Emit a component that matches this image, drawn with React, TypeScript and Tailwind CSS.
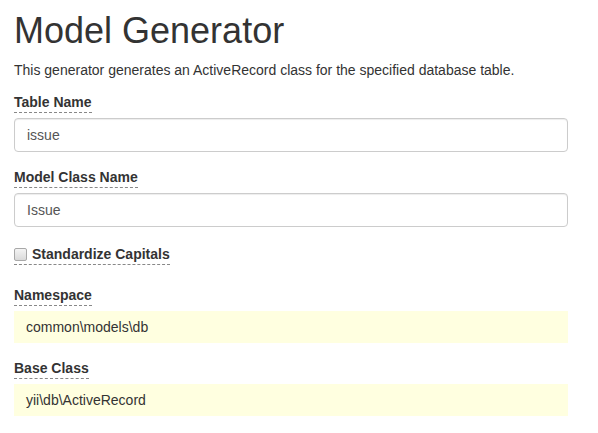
const labelCls =
  "block w-fit font-bold text-[14px] leading-[20px] text-[#333] border-b border-dashed border-[#888]";

function Field({ label, value }: { label: string; value: string }) {
  return (
    <div className="mb-[15px]">
      <label className={labelCls}>{label}</label>
      <input
        readOnly
        value={value}
        className="mt-[5px] block w-[554px] h-[34px] px-[12px] py-[6px] text-[14px] leading-[20px] text-[#555] bg-white border border-[#ccc] rounded-[4px] shadow-[inset_0_1px_1px_rgba(0,0,0,0.075)] outline-none"
      />
    </div>
  );
}

function StickyField({ label, value }: { label: string; value: string }) {
  return (
    <div className="mb-[15px]">
      <label className={labelCls}>{label}</label>
      <div className="mt-[5px] w-[554px] h-[32px] px-[12px] py-[6px] text-[14px] leading-[20px] text-[#333] bg-[#ffffe0]">
        {value}
      </div>
    </div>
  );
}

export default function App() {
  return (
    <div
      className="min-h-[433px] bg-white pl-[14px] text-[#333]"
      style={{ fontFamily: '"Liberation Sans", Arial, sans-serif' }}
    >
      {/* 标题 */}
      <h1 className="pt-[11px] text-[36px] leading-[40px] font-normal text-[#333]">Model Generator</h1>
      <p className="mt-[9px] text-[14px] leading-[20px]">
        This generator generates an ActiveRecord class for the specified database table.
      </p>

      <div className="mt-[12px]">
        <Field label="Table Name" value="issue" />
        <Field label="Model Class Name" value="Issue" />

        {/* 复选框 */}
        <div className="mt-[17px] mb-[20px]">
          <label className={labelCls + " flex items-center"}>
            <span className="inline-block w-[13px] h-[13px] mr-[5px] rounded-[2px] border border-[#a8a8a8] bg-gradient-to-b from-[#f4f4f4] to-[#dadada]" />
            Standardize Capitals
          </label>
        </div>

        <StickyField label="Namespace" value="common\models\db" />
        <StickyField label="Base Class" value="yii\db\ActiveRecord" />
      </div>
    </div>
  );
}
